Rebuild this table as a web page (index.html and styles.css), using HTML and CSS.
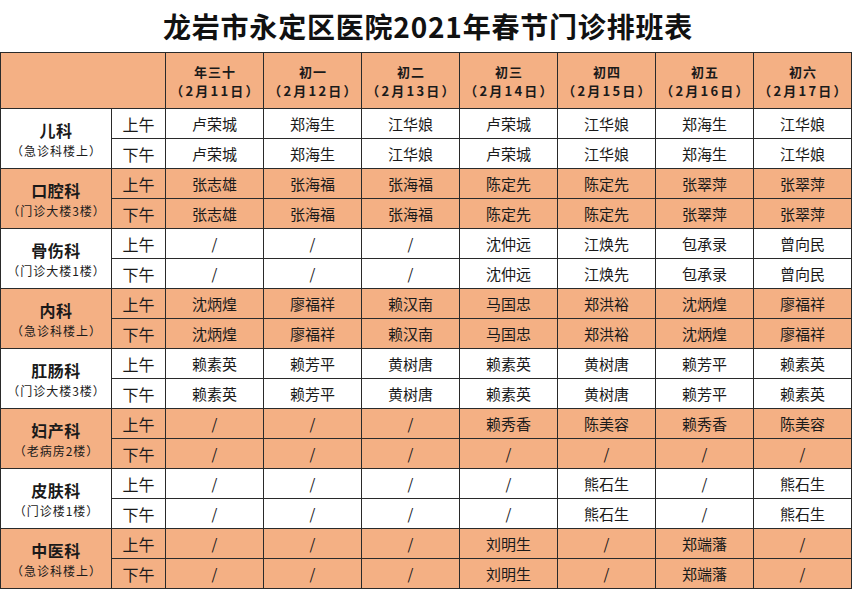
FILE: index.html
```html
<!DOCTYPE html>
<html lang="zh-CN">
<head>
<meta charset="utf-8">
<title>龙岩市永定区医院2021年春节门诊排班表</title>
<link rel="stylesheet" href="styles.css">
</head>
<body>
<div class="title">龙岩市永定区医院2021年春节门诊排班表</div>
<table class="schedule">
  <colgroup>
    <col class="c-dept"><col class="c-shift">
    <col><col><col><col><col><col><col>
  </colgroup>
  <thead>
    <tr>
      <th colspan="2"></th>
      <th><span class="day">年三十</span><span class="date">（2月11日）</span></th>
      <th><span class="day">初一</span><span class="date">（2月12日）</span></th>
      <th><span class="day">初二</span><span class="date">（2月13日）</span></th>
      <th><span class="day">初三</span><span class="date">（2月14日）</span></th>
      <th><span class="day">初四</span><span class="date">（2月15日）</span></th>
      <th><span class="day">初五</span><span class="date">（2月16日）</span></th>
      <th><span class="day">初六</span><span class="date">（2月17日）</span></th>
    </tr>
  </thead>
  <tbody class="white">
    <tr><th class="dept" rowspan="2"><span class="name">儿科</span><span class="loc">（急诊科楼上）</span></th><td class="shift">上午</td><td>卢荣城</td><td>郑海生</td><td>江华娘</td><td>卢荣城</td><td>江华娘</td><td>郑海生</td><td>江华娘</td></tr>
    <tr><td class="shift">下午</td><td>卢荣城</td><td>郑海生</td><td>江华娘</td><td>卢荣城</td><td>江华娘</td><td>郑海生</td><td>江华娘</td></tr>
  </tbody>
  <tbody class="orange">
    <tr><th class="dept" rowspan="2"><span class="name">口腔科</span><span class="loc">（门诊大楼3楼）</span></th><td class="shift">上午</td><td>张志雄</td><td>张海福</td><td>张海福</td><td>陈定先</td><td>陈定先</td><td>张翠萍</td><td>张翠萍</td></tr>
    <tr><td class="shift">下午</td><td>张志雄</td><td>张海福</td><td>张海福</td><td>陈定先</td><td>陈定先</td><td>张翠萍</td><td>张翠萍</td></tr>
  </tbody>
  <tbody class="white">
    <tr><th class="dept" rowspan="2"><span class="name">骨伤科</span><span class="loc">（门诊大楼1楼）</span></th><td class="shift">上午</td><td>/</td><td>/</td><td>/</td><td>沈仲远</td><td>江焕先</td><td>包承录</td><td>曾向民</td></tr>
    <tr><td class="shift">下午</td><td>/</td><td>/</td><td>/</td><td>沈仲远</td><td>江焕先</td><td>包承录</td><td>曾向民</td></tr>
  </tbody>
  <tbody class="orange">
    <tr><th class="dept" rowspan="2"><span class="name">内科</span><span class="loc">（急诊科楼上）</span></th><td class="shift">上午</td><td>沈炳煌</td><td>廖福祥</td><td>赖汉南</td><td>马国忠</td><td>郑洪裕</td><td>沈炳煌</td><td>廖福祥</td></tr>
    <tr><td class="shift">下午</td><td>沈炳煌</td><td>廖福祥</td><td>赖汉南</td><td>马国忠</td><td>郑洪裕</td><td>沈炳煌</td><td>廖福祥</td></tr>
  </tbody>
  <tbody class="white">
    <tr><th class="dept" rowspan="2"><span class="name">肛肠科</span><span class="loc">（门诊大楼3楼）</span></th><td class="shift">上午</td><td>赖素英</td><td>赖芳平</td><td>黄树唐</td><td>赖素英</td><td>黄树唐</td><td>赖芳平</td><td>赖素英</td></tr>
    <tr><td class="shift">下午</td><td>赖素英</td><td>赖芳平</td><td>黄树唐</td><td>赖素英</td><td>黄树唐</td><td>赖芳平</td><td>赖素英</td></tr>
  </tbody>
  <tbody class="orange">
    <tr><th class="dept" rowspan="2"><span class="name">妇产科</span><span class="loc">（老病房2楼）</span></th><td class="shift">上午</td><td>/</td><td>/</td><td>/</td><td>赖秀香</td><td>陈美容</td><td>赖秀香</td><td>陈美容</td></tr>
    <tr><td class="shift">下午</td><td>/</td><td>/</td><td>/</td><td>/</td><td>/</td><td>/</td><td>/</td></tr>
  </tbody>
  <tbody class="white">
    <tr><th class="dept" rowspan="2"><span class="name">皮肤科</span><span class="loc">（门诊楼1楼）</span></th><td class="shift">上午</td><td>/</td><td>/</td><td>/</td><td>/</td><td>熊石生</td><td>/</td><td>熊石生</td></tr>
    <tr><td class="shift">下午</td><td>/</td><td>/</td><td>/</td><td>/</td><td>熊石生</td><td>/</td><td>熊石生</td></tr>
  </tbody>
  <tbody class="orange">
    <tr><th class="dept" rowspan="2"><span class="name">中医科</span><span class="loc">（急诊科楼上）</span></th><td class="shift">上午</td><td>/</td><td>/</td><td>/</td><td>刘明生</td><td>/</td><td>郑端藩</td><td>/</td></tr>
    <tr><td class="shift">下午</td><td>/</td><td>/</td><td>/</td><td>刘明生</td><td>/</td><td>郑端藩</td><td>/</td></tr>
  </tbody>
</table>
</body>
</html>
```

FILE: styles.css
```css
html, body {
  margin: 0;
  padding: 0;
  background: #ffffff;
}
body {
  font-family: "Noto Sans CJK SC", "Noto Sans", sans-serif;
  color: #1a1a1a;
}
.title {
  height: 52px;
  display: flex;
  align-items: center;
  justify-content: center;
  font-size: 28px;
  font-weight: 700;
  letter-spacing: 0.8px;
  color: #111;
  padding-left: 4px;
  box-sizing: border-box;
}
.schedule {
  border-collapse: collapse;
  table-layout: fixed;
  width: 852px;
}
.c-dept { width: 111px; }
.c-shift { width: 54px; }
.schedule th,
.schedule td {
  border: 1px solid #2a2a2a;
  padding: 0;
  text-align: center;
  vertical-align: middle;
  overflow: hidden;
  white-space: nowrap;
}
.schedule thead th {
  background: #f4b084;
  height: 55px;
  font-weight: 700;
}
.schedule thead .day,
.schedule thead .date {
  display: block;
  font-size: 13px;
  line-height: 19px;
}
.schedule thead .day {
  letter-spacing: 1px;
  padding-left: 1px;
}
.schedule thead .date {
  letter-spacing: 2.2px;
  padding-left: 2px;
}
.schedule tbody td {
  height: 29px;
  font-size: 15px;
  line-height: 22px;
}
.schedule tbody td.shift {
  font-size: 16px;
}
.white { background: #ffffff; }
.orange { background: #f4b084; }
.dept .name {
  display: block;
  font-size: 16px;
  font-weight: 700;
  line-height: 21px;
  margin-top: 2px;
  letter-spacing: 0.5px;
}
.dept .loc {
  display: block;
  font-size: 12px;
  font-weight: 400;
  line-height: 16px;
  margin-top: 2px;
  letter-spacing: 1px;
  padding-left: 1px;
}
```
